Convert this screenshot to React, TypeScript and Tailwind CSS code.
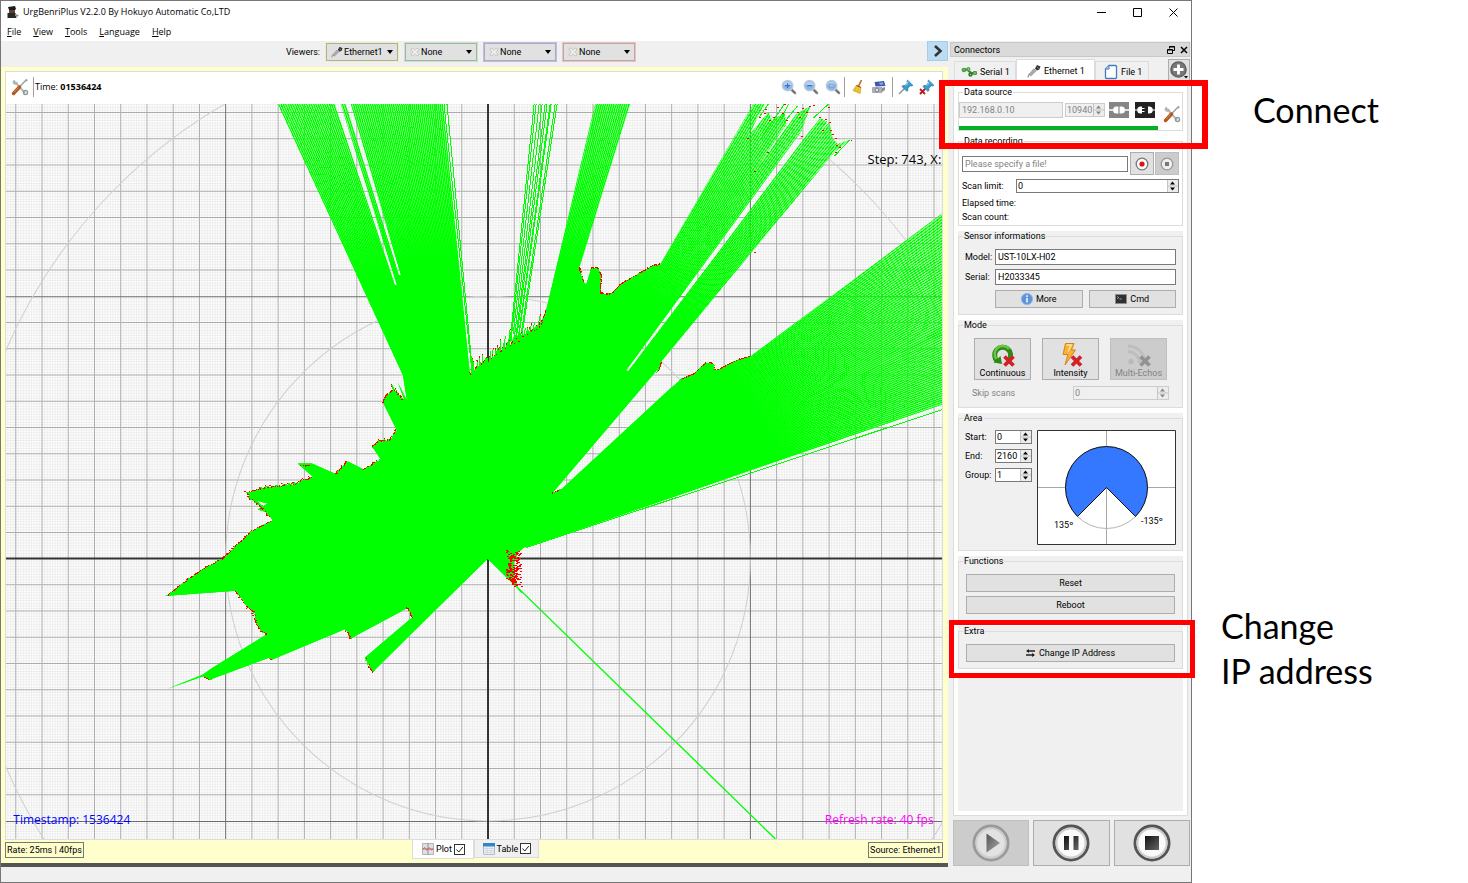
import React from "react";

type Pt = [number, number];

const ORIGIN: Pt = [488, 558];

/* ---------- Scan data ---------- */

const outline: Pt[] = [
  [488, 558], [373, 671], [365, 657], [413, 616], [408, 607], [352, 637], [346, 628],
  [272, 659], [269, 657], [210, 679], [205, 675], [168, 688], [203, 674], [213, 667],
  [268, 633], [261, 630], [257, 622], [255, 611], [247, 605], [241, 596], [236, 590],
  [168, 595], [176, 589], [190, 578], [204, 568], [224, 558], [233, 549], [252, 531],
  [262, 525], [273, 520], [268, 512], [258, 509], [268, 503], [253, 499], [248, 493],
  [258, 489], [268, 487], [292, 485], [310, 480], [314, 477], [298, 463], [312, 463],
  [337, 474], [348, 461], [364, 469], [381, 459], [373, 447], [379, 441], [390, 440],
  [397, 430], [383, 402], [388, 394], [394, 390], [406, 404], [398, 382], [407, 400],
  [403, 375], [278, 104], [335, 104], [395, 285], [397, 285], [341, 104], [346, 104],
  [399, 275], [401, 275], [351, 104], [443, 104], [470, 375], [478, 366], [488, 361],
  [500, 352], [510, 346], [514, 336], [526, 334], [541, 322], [546, 310], [595, 104],
  [630, 104], [579, 268], [581, 280], [586, 284], [591, 268], [597, 268], [601, 275],
  [600, 294], [611, 294], [622, 283], [640, 273], [652, 266], [660, 264], [753, 104],
  [764, 104], [748, 136], [768, 112], [772, 121], [784, 112], [786, 124], [754, 171],
  [796, 114], [810, 106], [801, 131], [626, 370], [628, 371], [807, 134], [820, 118],
  [827, 122], [819, 133], [829, 122], [832, 138], [837, 144], [849, 140], [834, 152],
  [662, 360], [655, 372], [552, 493], [561, 489], [670, 388], [681, 379], [693, 374],
  [705, 363], [712, 363], [715, 371], [730, 363], [734, 361], [750, 356], [942, 213],
  [942, 404], [538, 543], [524, 547], [518, 552], [514, 562], [514, 575], [518, 588],
];

const walls: { pts: Pt[]; reach: number }[] = [
  { pts: [[373, 671], [366, 657]], reach: 3 },
  { pts: [[413, 616], [407, 606]], reach: 3 },
  { pts: [[352, 637], [346, 628]], reach: 3 },
  { pts: [[272, 659], [269, 657]], reach: 2 },
  { pts: [[210, 679], [204, 675]], reach: 3 },
  { pts: [[268, 633], [261, 630], [257, 622], [255, 611], [247, 605], [241, 596], [236, 590]], reach: 3 },
  { pts: [[168, 595], [190, 578], [204, 568], [224, 558], [233, 549], [252, 531], [273, 520]], reach: 2 },
  { pts: [[271, 516], [262, 506], [253, 499], [248, 493], [268, 487], [292, 485], [314, 477]], reach: 7 },
  { pts: [[303, 466], [312, 466]], reach: 8 },
  { pts: [[337, 474], [348, 461]], reach: 3 },
  { pts: [[364, 469], [381, 459]], reach: 2 },
  { pts: [[373, 447], [379, 441], [390, 440], [397, 430]], reach: 3 },
  { pts: [[383, 402], [388, 394], [394, 390]], reach: 3 },
  { pts: [[394, 390], [406, 404]], reach: 14 },
  { pts: [[470, 375], [478, 366], [488, 361], [500, 352], [510, 346], [526, 338], [541, 326]], reach: 18 },
  { pts: [[541, 326], [546, 310]], reach: 5 },
  { pts: [[579, 268], [583, 284]], reach: 4 },
  { pts: [[591, 268], [597, 268], [601, 275], [600, 294], [611, 294]], reach: 2 },
  { pts: [[611, 294], [622, 283], [640, 273], [652, 266], [660, 264]], reach: 2 },
  { pts: [[661, 362], [658, 371]], reach: 2 },
  { pts: [[552, 493], [561, 489]], reach: 2 },
  { pts: [[681, 379], [693, 374], [705, 363], [712, 363], [715, 371], [734, 361], [750, 356]], reach: 2 },
];

/* Far returns where single beams end at scattered distances. */
const farTips: Pt[] = [
  [759, 117], [764, 113], [769, 120], [765, 109], [777, 107], [782, 113], [784, 104], [773, 117],
  [786, 120], [797, 112], [802, 108], [806, 112], [809, 106], [813, 105], [799, 117], [767, 152],
  [801, 136], [819, 117], [825, 119], [829, 122], [828, 107], [830, 130], [832, 134], [835, 138],
  [836, 145], [839, 147], [850, 140], [835, 152], [822, 130], [747, 138], [754, 171], [754, 252],
];

function makeRandom(seed: number) {
  let s = seed;
  return () => {
    s = (s * 1664525 + 1013904223) % 4294967296;
    return s / 4294967296;
  };
}

function rayTo(angle: number, from: number, to: number) {
  const c = Math.cos(angle);
  const s = Math.sin(angle);
  return `M${(ORIGIN[0] + c * from).toFixed(1)} ${(ORIGIN[1] - s * from).toFixed(1)}L${(ORIGIN[0] + c * to).toFixed(1)} ${(ORIGIN[1] - s * to).toFixed(1)}`;
}

const fan = (() => {
  let d = "";
  for (let i = -180; i <= 900; i += 1) d += rayTo((i * 0.25 * Math.PI) / 180, 0, 720);
  return d;
})();

const noise = (() => {
  const random = makeRandom(11);
  let green = "";
  let red = "";
  walls.forEach(({ pts, reach }) => {
    for (let i = 1; i < pts.length; i += 1) {
      const [ax, ay] = pts[i - 1];
      const [bx, by] = pts[i];
      const steps = Math.max(2, Math.round(Math.hypot(bx - ax, by - ay)));
      for (let k = 0; k < steps; k += 1) {
        const x = ax + ((bx - ax) * k) / steps;
        const y = ay + ((by - ay) * k) / steps;
        const angle = Math.atan2(ORIGIN[1] - y, x - ORIGIN[0]);
        const r = Math.hypot(x - ORIGIN[0], y - ORIGIN[1]);
        const out = random() * random() * reach;
        green += rayTo(angle, r - 3, r + out);
        if (random() < 0.7) red += rayTo(angle, r + out - 0.5, r + out + 0.8);
      }
    }
  });
  farTips.forEach(([x, y]) => {
    red += `M${x} ${y}.5h1.5`;
  });
  for (let i = 0; i < 200; i += 1) {
    const y = 549 + random() * 36;
    const x = 513 + (random() + random() - 1) * 8;
    if (x - 488 > y - 559) red += `M${x.toFixed(0)} ${y.toFixed(0)}.5h1.5`;
  }
  return { green, red };
})();

const thinRays = [534, 536, 539, 542, 545, 547, 550, 551, 555, 557]
  .map((x, i) => {
    const angle = Math.atan2(454, x - 488);
    return rayTo(angle, 212 + ((i * 7) % 20), 462);
  })
  .join("");

const gridLines = (step: number, skipTenth: boolean) => {
  let d = "";
  for (let i = -260; i <= 260; i += 1) {
    if (skipTenth && i % 10 === 0) continue;
    const x = ORIGIN[0] + i * step;
    const y = ORIGIN[1] + i * step;
    if (x > 5 && x < 943) d += `M${x.toFixed(1)} 104V839`;
    if (y > 103 && y < 839) d += `M5 ${y.toFixed(1)}H943`;
  }
  return d;
};

function ScanPlot() {
  const area = outline.map((p) => p.join(",")).join(" ");
  return (
    <svg
      viewBox="6 104 936 734"
      preserveAspectRatio="xMidYMid slice"
      className="block h-0 w-full grow bg-white font-['Open_Sans',sans-serif]"
      role="img"
      aria-label="Scan plot"
    >
      <defs>
        <clipPath id="scan-area">
          <polygon points={area} />
        </clipPath>
        <radialGradient id="scan-density" gradientUnits="userSpaceOnUse" cx="488" cy="558" r="560">
          <stop offset="0.54" stopColor="#00ff00" />
          <stop offset="0.66" stopColor="#00ff00" stopOpacity="0.7" />
          <stop offset="0.92" stopColor="#00ff00" stopOpacity="0.45" />
        </radialGradient>
      </defs>
      <path d={gridLines(2.62, true)} stroke="#eeeeee" strokeWidth="1" fill="none" />
      <path d={gridLines(26.2, true)} stroke="#acacac" strokeWidth="1" fill="none" />
      <path d="M226 104V838M750 104V838M6 296.5H942M6 820.5H942" stroke="#6c6c6c" fill="none" />
      <g fill="none" stroke="#cfcfcf">
        <circle cx="488" cy="558" r="262" />
        <circle cx="488" cy="558" r="524.5" />
      </g>
      <path d="M488 104V838M6 558H942" stroke="#333" strokeWidth="2" fill="none" />
      <polygon points={area} fill="url(#scan-density)" />
      <path d="M150 440H400V700H150z" fill="#00ff00" clipPath="url(#scan-area)" />
      <g stroke="#00ff00" fill="none" shapeRendering="crispEdges">
        <g clipPath="url(#scan-area)">
          <path d={fan} />
        </g>
        <path d={noise.green} />
        <path d={thinRays} />
        <path d="M444 104L472 372M447 104L473 376M526 547L942 409M500 568L522 592M396 285L402 296M400 275L405 288" />
        <path d="M759 117L768 104M760 140L784 104M778 124L788 104M784 122L797 106M813 118L828 104M834 156L849 140" />
      </g>
      <path d="M488 558L775 838" stroke="#00ff00" strokeWidth="1.4" fill="none" />
      <path d={noise.red} stroke="#ff0000" fill="none" shapeRendering="crispEdges" />
      <text x="867" y="164" fontSize="13" fill="#000">Step: 743, X:</text>
      <text x="14" y="823" fontSize="12" fill="#0000ff">Timestamp: 1536424</text>
      <text x="933" y="823" fontSize="12" textAnchor="end" fill="#ff00ff">Refresh rate: 40 fps</text>
    </svg>
  );
}

/* ---------- Icons ---------- */

const ToolsIcon = () => (
  <svg viewBox="0 0 18 18" className="size-[18px]" aria-hidden="true">
    <path d="M5 5l9 10" stroke="#b3bcbc" strokeWidth="2" />
    <path d="M1.5 3.5l2-2 1 2 2 .5.5 2-2 1-3-1z" fill="#aeb8b8" />
    <circle cx="14.5" cy="14.5" r="2" fill="none" stroke="#8c989a" strokeWidth="1.4" />
    <path d="M15.5 1.5L8 9.5" stroke="#9ba5a8" strokeWidth="1.5" />
    <path d="M15 1l1.8 1-1.4 2" fill="#8c989a" />
    <path d="M8.5 9L2.5 15.5" stroke="#b4551b" strokeWidth="3.4" strokeLinecap="round" />
    <path d="M7.5 9.5L3 14.2" stroke="#dc8a4c" strokeWidth="1" />
  </svg>
);

const PlugIcon = ({ className }: { className: string }) => (
  <svg viewBox="0 0 14 14" className={className} aria-hidden="true">
    <path d="M1 13.5c0-2 .6-3 2-4" stroke="#999" strokeWidth="1.3" fill="none" />
    <path d="M2 10.5L6.8 4.6l2.5 2.2L4 12z" fill="#a9aba6" stroke="#888" strokeWidth=".5" />
    <path d="M8 4.5L10 1l3.5 1.6-1.2 3-2.4 1z" fill="#333" />
    <path d="M10 3.4l1.6.8" stroke="#999" strokeWidth=".8" />
  </svg>
);

const NoneIcon = () => (
  <svg viewBox="0 0 10 10" className="size-[10px] shrink-0" aria-hidden="true">
    <path d="M1.5 1.5l7 7M8.5 1.5l-7 7" stroke="#b8b8b8" strokeWidth="3" />
    <path d="M2 2l6 6M8 2L2 8" stroke="#efefef" strokeWidth="1.8" />
  </svg>
);

const SerialIcon = () => (
  <svg viewBox="0 0 17 12" className="h-3 w-[17px]" aria-hidden="true">
    <path d="M1 4.5C4 1.5 7 4 9 6s4 1 6 1" stroke="#3c8a35" strokeWidth="2.2" fill="none" />
    <circle cx="3" cy="4" r="2.2" fill="#4c9b45" />
    <circle cx="7.5" cy="3" r="2" fill="#57a650" />
    <circle cx="9.5" cy="8.5" r="2.2" fill="#2f7a2a" />
    <rect x="12" y="5" width="4" height="4" rx="1" fill="#4c9b45" />
    <path d="M2.5 4h1M7 3h1M9 8.5h1M13.2 7h1.4" stroke="#d4edd0" strokeWidth=".9" />
  </svg>
);

const FileIcon = () => (
  <svg viewBox="0 0 14 16" className="h-4 w-[14px]" aria-hidden="true">
    <path d="M5 1.5h6.5q1 0 1 1v11q0 1-1 1h-9q-1 0-1-1V5z" fill="#fff" stroke="#3f7dc0" strokeWidth="1.3" />
    <path d="M1.5 5H5V1.5" fill="#b8d3ee" stroke="#3f7dc0" />
  </svg>
);

const AddIcon = () => (
  <svg viewBox="0 0 20 20" className="size-5" aria-hidden="true">
    <circle cx="9.5" cy="9.5" r="7.6" fill="#777" stroke="#5c5c5c" strokeWidth="1.4" />
    <path d="M9.5 4.5v10M4.5 9.5h10" stroke="#fff" strokeWidth="2.8" />
    <path d="M15 16h4l-2 2.5z" fill="#000" />
  </svg>
);

const ZoomIcon = ({ sign }: { sign: "plus" | "minus" | "fit" }) => (
  <svg viewBox="0 0 16 16" className="size-4" aria-hidden="true">
    <path d="M10 10l4 4" stroke="#8b8b8b" strokeWidth="2.6" strokeLinecap="round" />
    <path d="M11 11.4l2.6 2.6" stroke="#555" strokeWidth="1" />
    <circle cx="6.6" cy="6.6" r="5.2" fill="#8ab6ea" stroke="#bccada" strokeWidth="1.5" />
    <path d="M2.5 6a4.2 4.2 0 0 1 8.2 0z" fill="#b3d1f4" />
    {sign === "plus" && <path d="M6.6 4.2v4.8M4.2 6.6H9" stroke="#3a70bd" strokeWidth="1.2" />}
    {sign === "minus" && <path d="M4.2 6.6H9" stroke="#3a70bd" strokeWidth="1.2" />}
    {sign === "fit" && <path d="M4 5.2h5.2v3H4z" stroke="#6a95d0" fill="#a6c7ee" strokeWidth=".8" />}
  </svg>
);

const BroomIcon = () => (
  <svg viewBox="0 0 16 16" className="size-4" aria-hidden="true">
    <path d="M11.5 1L8.6 7" stroke="#a87b24" strokeWidth="1.7" />
    <path d="M6.5 6.2l4.3 2-.6 6.3L3 11.5z" fill="#f3cf2d" stroke="#b58d14" strokeWidth=".6" />
    <path d="M6.4 6.4l4.4 2" stroke="#c63a2a" strokeWidth="1.1" />
    <path d="M5 11.5l1.5-3M7.4 13l1-3.6" stroke="#c29a1a" strokeWidth=".6" />
  </svg>
);

const SnapshotIcon = () => (
  <svg viewBox="0 0 16 16" className="size-4" aria-hidden="true">
    <path d="M3.5 3l9.5-1 1.5 5-10 .5z" fill="#3c58a8" />
    <path d="M8 3.8l4-.4.6 2-3.8.4z" fill="#8fa8e4" />
    <path d="M1.5 8.5h9.5v5H1.5z" fill="#b0b3bc" stroke="#888c98" strokeWidth=".6" />
    <circle cx="6" cy="11" r="1.8" fill="#e7e9f0" stroke="#666c80" strokeWidth=".8" />
    <path d="M11 9l3-1v3l-3 2z" fill="#8d909c" />
  </svg>
);

const PinIcon = ({ remove }: { remove?: boolean }) => (
  <svg viewBox="0 0 16 16" className="size-4" aria-hidden="true">
    <path d="M6.5 9.5L1 15" stroke="#8b8f94" strokeWidth="1.4" />
    <path d="M9.4 1L15 6.4l-1.6.7-1-.3-2.6 2.5.2 2.2-1.2.8L3.9 7.6l.9-1.1 2.2.1 2.4-2.7-.4-1.2z" fill="#3a9ccb" stroke="#1f6d98" strokeWidth=".6" />
    <path d="M9.8 2.6l-.2 2.2-2 2" stroke="#a6dbf0" strokeWidth="1" fill="none" />
    {remove && <path d="M1 10l5 5M6 10l-5 5" stroke="#c6161d" strokeWidth="1.8" />}
  </svg>
);

const RedCross = ({ x, y, color = "#d21f28" }: { x: number; y: number; color?: string }) => (
  <path d={`M${x} ${y}l9 9m0 -9l-9 9`} stroke={color} strokeWidth="3.8" />
);

const ContinuousIcon = () => (
  <svg viewBox="0 0 26 26" className="size-[26px]" aria-hidden="true">
    <path d="M7.2 19A8 8 0 1 1 19 18" stroke="#2c8a16" strokeWidth="5" fill="none" />
    <path d="M6.4 17A8 8 0 0 1 19 7" stroke="#6cc840" strokeWidth="2.4" fill="none" />
    <path d="M3.5 20.5l8.5 1.5-1.5-8z" fill="#2c8a16" />
    <RedCross x={14.5} y={14.5} />
  </svg>
);

const IntensityIcon = () => (
  <svg viewBox="0 0 26 26" className="size-[26px]" aria-hidden="true">
    <path d="M7.5 1.5h8.5l-2.5 6.5h4L7 23l2.8-10.5H5z" fill="#f9b233" stroke="#d27c14" strokeWidth=".9" />
    <path d="M8.6 3h4.6L10 9.5" stroke="#fde3a0" strokeWidth="1.5" fill="none" />
    <RedCross x={14} y={14.5} />
  </svg>
);

const EchoIcon = () => (
  <svg viewBox="0 0 26 26" className="size-[26px]" aria-hidden="true">
    <path d="M2 4a17 17 0 0 1 17 17M2 9.5A11.5 11.5 0 0 1 13.5 21" stroke="#bebebe" strokeWidth="3" fill="none" />
    <circle cx="5" cy="19.5" r="2.7" fill="#bababa" />
    <RedCross x={14.5} y={14.5} color="#929292" />
  </svg>
);

const ConnectedIcon = () => (
  <svg viewBox="0 0 20 16" className="h-4 w-5" aria-hidden="true">
    <path d="M0 0h20v16H0z" fill="#858585" />
    <path d="M0 8h4M16 8h4" stroke="#fff" strokeWidth="1.4" />
    <path d="M9.4 4.5v7H7.5q-3.5 0-3.5-3.5t3.5-3.5zM10.6 4.5v7h1.9q3.5 0 3.5-3.5t-3.5-3.5z" fill="#fff" />
  </svg>
);

const DisconnectedIcon = () => (
  <svg viewBox="0 0 20 16" className="h-4 w-5" aria-hidden="true">
    <path d="M0 0h20v16H0z" fill="#222" />
    <path d="M0 8h3M17 8h3M6 6.5h3.5M6 9.5h3.5" stroke="#fff" strokeWidth="1.2" />
    <path d="M7 4.5v7H5.5q-3.3 0-3.3-3.5t3.3-3.5zM13 4.5v7h1q3.8 0 3.8-3.5T14 4.5z" fill="#fff" />
  </svg>
);

const InfoIcon = () => (
  <svg viewBox="0 0 12 12" className="size-3" aria-hidden="true">
    <circle cx="6" cy="6" r="5.6" fill="#5d94dc" stroke="#8cb4e8" strokeWidth=".8" />
    <path d="M6 5v4.4M6 2.3v1.6" stroke="#fff" strokeWidth="1.5" />
  </svg>
);

const TerminalIcon = () => (
  <svg viewBox="0 0 12 10" className="h-[10px] w-3" aria-hidden="true">
    <path d="M.5 .5h11v9H.5z" fill="#2e3133" stroke="#8a8a8a" />
    <path d="M2.3 2.5l1.4 1-1.4 1M4.5 5h2" stroke="#ddd" strokeWidth=".7" fill="none" />
  </svg>
);

const SwapIcon = () => (
  <svg viewBox="0 0 9 8" className="h-2 w-[9px]" aria-hidden="true">
    <path d="M1 2h8M0 6h8" stroke="#222" strokeWidth="1.3" />
    <path d="M0 2l3-2v4zM9 6L6 4v4z" fill="#222" />
  </svg>
);

const PlotIcon = () => (
  <svg viewBox="0 0 12 12" className="size-3" aria-hidden="true">
    <path d="M.5 .5h11v11H.5z" fill="#e0e0e4" stroke="#b5b5b8" />
    <path d="M6 0v12M0 6h12" stroke="#8f8f95" />
    <path d="M1 6l2-1.4L5 7.4l2.4-2.8L9 7l2-1" stroke="#e0525c" fill="none" />
  </svg>
);

const TableIcon = () => (
  <svg viewBox="0 0 12 12" className="size-3" aria-hidden="true">
    <path d="M.5 .5h11v11H.5z" fill="#eef1f5" stroke="#b4bcc8" />
    <path d="M0 0h12v3.5H0z" fill="#2f86c8" />
    <path d="M1 5.5h10M1 7.5h10M1 9.5h10M4 4v7M8 4v7" stroke="#c9d1db" strokeWidth=".7" />
  </svg>
);

const AppIcon = () => (
  <svg viewBox="0 0 14 14" className="size-[14px]" aria-hidden="true">
    <path d="M2 2l7-1 1 3-1 1H3z" fill="#1d1d1d" />
    <path d="M3 5h6v3H3z" fill="#6a3c28" />
    <path d="M1.5 8h8l1 5h-9z" fill="#242a26" />
    <path d="M9 8.5l4 2-1.5 1.3L9 11z" fill="#8d9494" />
  </svg>
);

const MediaIcon = ({ kind }: { kind: "play" | "pause" | "stop" }) => {
  const dim = kind === "play";
  return (
    <svg viewBox="0 0 38 38" className="size-[38px]" aria-hidden="true">
      <defs>
        <linearGradient id={`ink-${kind}`} x1="0" y1="0" x2="1" y2="1">
          <stop offset="0" stopColor={dim ? "#555" : "#111"} />
          <stop offset="1" stopColor={dim ? "#a8a8a8" : "#666"} />
        </linearGradient>
      </defs>
      <circle cx="19" cy="19" r="17" fill={dim ? "#e2e2e2" : "#fafafa"} stroke={dim ? "#9a9a9a" : "#555"} strokeWidth="3" />
      <circle cx="19" cy="19" r="14.6" fill="none" stroke="#cfcfcf" strokeWidth="2" />
      {kind === "play" && <path d="M14.5 9.5L28 19l-13.5 9.5z" fill="url(#ink-play)" />}
      {kind === "pause" && <path d="M12 12h5v14h-5zM21.5 12h5v14h-5z" fill="url(#ink-pause)" />}
      {kind === "stop" && <path d="M12 12h14v14H12z" fill="url(#ink-stop)" />}
    </svg>
  );
};

const Arrows = () => (
  <svg viewBox="0 0 11 12" className="h-full w-[11px] shrink-0" aria-hidden="true">
    <path d="M0 0h11v12H0z" fill="#ececec" />
    <path d="M.5 0v12M0 6h11" stroke="#c4c4c4" />
    <path d="M3 4.5h5l-2.5-3zM3 7.5h5l-2.5 3z" fill="currentColor" />
  </svg>
);

/* ---------- Controls ---------- */

const Caret = () => (
  <svg viewBox="0 0 6 4" className="h-1 w-[6px] shrink-0" aria-hidden="true">
    <path d="M0 0h6L3 4z" fill="#000" />
  </svg>
);

function ViewerSelect({ value, ring, label }: { value: string; ring: string; label: string }) {
  return (
    <div className={`border ${ring}`}>
      <div className="flex h-[18px] w-[72px] items-center border border-[#adadad] bg-[#e1e1e1] px-1">
        {value === "None" ? <NoneIcon /> : <PlugIcon className="size-3 shrink-0" />}
        <select aria-label={label} defaultValue={value} className="min-w-0 flex-1 appearance-none bg-transparent pl-px outline-none">
          <option>{value}</option>
        </select>
        <Caret />
      </div>
    </div>
  );
}

function Spin({ id, value, className, disabled, label }: { id: string; value: string; className: string; disabled?: boolean; label?: string }) {
  const tone = disabled ? "border-[#cccccc] bg-[#f0f0f0] text-[#838383]" : "border-[#7a7a7a] bg-white text-black";
  return (
    <div className={`flex h-[14px] border ${tone} ${className}`}>
      <input id={id} aria-label={label} defaultValue={value} disabled={disabled} className="w-0 min-w-0 flex-1 bg-transparent pl-px outline-none" />
      <Arrows />
    </div>
  );
}

function Group({ title, tone = "bg-[#f0f0f0]", className = "", children }: { title: string; tone?: string; className?: string; children: React.ReactNode }) {
  return (
    <div className={tone}>
      <fieldset className="min-w-0 border border-[#dcdcdc]">
        <legend className="ml-1 px-px leading-[10px]">{title}</legend>
        <div className={className}>{children}</div>
      </fieldset>
    </div>
  );
}

const button = "flex items-center justify-center border border-[#adadad] bg-[#e1e1e1]";

function ModeButton({ label, disabled, children }: { label: string; disabled?: boolean; children: React.ReactNode }) {
  return (
    <button
      type="button"
      disabled={disabled}
      className={`flex h-[42px] w-[57px] flex-col items-center justify-end border leading-[11px] whitespace-nowrap ${disabled ? "border-[#bfbfbf] bg-[#cccccc] text-[#838383]" : "border-[#adadad] bg-[#e1e1e1]"}`}
    >
      {children}
      {label}
    </button>
  );
}

function AreaPreview() {
  return (
    <svg viewBox="0 0 139 115" className="h-[115px] min-w-0 flex-1" role="img" aria-label="Scan area">
      <path d="M.5 .5h138v114H.5z" fill="#fff" stroke="#333" />
      <path d="M69.5 1v113M1 57.5h137" stroke="#a8a8a8" />
      <circle cx="69.5" cy="57.5" r="41" fill="#fff" stroke="#b4b4b4" />
      <path d="M69.5 57.5v41" stroke="#a8a8a8" />
      <path d="M69.5 57.5L40.5 86.5A41 41 0 1 1 98.5 86.5z" fill="#3378ff" stroke="#111" />
      <text x="17" y="98" fontSize="9">135º</text>
      <text x="104" y="94" fontSize="9">-135º</text>
    </svg>
  );
}

function Connectors() {
  const field = "h-4 min-w-0 border border-[#7a7a7a] bg-white pl-0.5 outline-none";
  return (
    <aside className="flex w-60 shrink-0 flex-col pt-[2px]">
      <header className="flex h-[15px] items-center border border-[#c8c8c8] bg-[#dadada] pr-px pl-[3px]">
        <h2 className="flex-1">Connectors</h2>
        <button type="button" aria-label="Float" className="mr-[5px]">
          <svg viewBox="0 0 8 8" className="size-2"><path d="M2.5 2.5v-2h5v4h-2M2 1h5.5M.5 3.5h5v4h-5zM.5 4h5" fill="none" stroke="#000" /></svg>
        </button>
        <button type="button" aria-label="Close">
          <svg viewBox="0 0 8 8" className="size-2"><path d="M1 1l6 6M7 1L1 7" stroke="#000" strokeWidth="1.5" /></svg>
        </button>
      </header>

      <div className="mt-[2px] flex items-end pl-1">
        <button type="button" className="flex h-[20px] w-[62px] items-center gap-[2px] border border-b-0 border-[#dcdcdc] pl-[6px] whitespace-nowrap"><SerialIcon />Serial 1</button>
        <button type="button" className="flex h-[22px] w-[79px] items-center gap-[3px] border border-b-0 border-[#dcdcdc] bg-white pl-[10px] whitespace-nowrap"><PlugIcon className="size-[14px]" />Ethernet 1</button>
        <button type="button" className="flex h-[20px] w-[54px] items-center gap-[3px] border border-b-0 border-[#dcdcdc] pl-2 whitespace-nowrap"><FileIcon />File 1</button>
        <button type="button" aria-label="Add connector" className="ml-auto flex size-[22px] items-center justify-center border border-[#adadad] bg-[#e1e1e1]"><AddIcon /></button>
      </div>

      <div className="mr-[2px] ml-[3px] flex grow flex-col gap-[5px] border border-[#dcdcdc] bg-white px-1 pt-[5px] pb-1">
        <div className="relative">
          <Group title="Data source" tone="bg-white" className="pt-[5px]">
            <div className="flex">
              <div className="w-[199px]">
                <div className="flex items-center">
                  <input aria-label="IP address" defaultValue="192.168.0.10" disabled className="h-4 w-[104px] border border-[#cccccc] bg-[#f0f0f0] pl-0.5 text-[#838383]" />
                  <Spin id="port" label="Port" value="10940" disabled className="ml-[2px] w-10" />
                  <button type="button" aria-label="Connect" className="ml-1"><ConnectedIcon /></button>
                  <button type="button" aria-label="Disconnect" className="ml-[6px]"><DisconnectedIcon /></button>
                </div>
                <div className="mt-2 h-1 bg-[#06b025]" />
              </div>
              <button type="button" aria-label="Connection settings" className="mt-[3px] ml-[5px] self-start"><ToolsIcon /></button>
            </div>
          </Group>
          <div className="pointer-events-none absolute -top-[7px] -right-[25px] -bottom-[18px] -left-[19px] z-10 border-[6px] border-[#ff0000]" />
        </div>

        <Group title="Data recording" tone="bg-white" className="px-[3px] pt-[6px] pb-px">
          <div className="flex items-center">
            <input aria-label="Recording file" placeholder="Please specify a file!" className={`${field} flex-1 placeholder:text-[#838383]`} />
            <button type="button" aria-label="Record" className={`${button} ml-[2px] h-[23px] w-6`}>
              <svg viewBox="0 0 14 14" className="size-[14px]"><circle cx="7" cy="7" r="5.8" fill="#fff" stroke="#777" strokeWidth="1.3" /><circle cx="7" cy="7" r="2.6" fill="#dc1414" /></svg>
            </button>
            <button type="button" aria-label="Stop recording" disabled className="ml-px flex h-[23px] w-6 items-center justify-center border border-[#bfbfbf] bg-[#cccccc]">
              <svg viewBox="0 0 14 14" className="size-[14px]"><circle cx="7" cy="7" r="5.8" fill="#eee" stroke="#999" strokeWidth="1.3" /><path d="M5 5h4v4H5z" fill="#777" /></svg>
            </button>
          </div>
          <div className="mt-1 flex items-center">
            <label htmlFor="limit" className="w-[54px]">Scan limit:</label>
            <Spin id="limit" value="0" className="flex-1" />
          </div>
          <p className="mt-[3px] leading-[14px]">Elapsed time:</p>
          <p className="leading-[14px]">Scan count:</p>
        </Group>

        <Group title="Sensor informations" className="px-[6px] pt-2 pb-[6px]">
          <div className="flex items-center">
            <label htmlFor="model" className="w-[30px]">Model:</label>
            <input id="model" defaultValue="UST-10LX-H02" className={`${field} flex-1`} />
          </div>
          <div className="mt-1 flex items-center">
            <label htmlFor="serial" className="w-[30px]">Serial:</label>
            <input id="serial" defaultValue="H2033345" className={`${field} flex-1`} />
          </div>
          <div className="mt-[5px] flex gap-[6px] pl-[30px]">
            <button type="button" className={`${button} h-[18px] flex-1 gap-[3px]`}><InfoIcon />More</button>
            <button type="button" className={`${button} h-[18px] flex-1 gap-[3px]`}><TerminalIcon />Cmd</button>
          </div>
        </Group>

        <Group title="Mode" className="px-[13px] pt-2 pb-[7px]">
          <div className="flex justify-between px-[2px]">
            <ModeButton label="Continuous"><ContinuousIcon /></ModeButton>
            <ModeButton label="Intensity"><IntensityIcon /></ModeButton>
            <ModeButton label="Multi-Echos" disabled><EchoIcon /></ModeButton>
          </div>
          <div className="mt-[6px] flex items-center justify-between text-[#838383]">
            <label htmlFor="skip">Skip scans</label>
            <Spin id="skip" value="0" disabled className="w-24" />
          </div>
        </Group>

        <Group title="Area" className="px-[6px] pt-[7px] pb-[5px]">
          <div className="flex gap-[5px]">
            <div className="flex flex-col gap-[5px]">
              {[["Start:", "0"], ["End:", "2160"], ["Group:", "1"]].map(([name, value]) => (
                <div key={name} className="flex items-center">
                  <label htmlFor={name} className="w-[30px]">{name}</label>
                  <Spin id={name} value={value} className="w-[37px]" />
                </div>
              ))}
            </div>
            <AreaPreview />
          </div>
        </Group>

        <Group title="Functions" className="px-[7px] pt-[8px] pb-[6px]">
          <button type="button" className={`${button} h-[18px] w-full`}>Reset</button>
          <button type="button" className={`${button} mt-1 h-[18px] w-full`}>Reboot</button>
        </Group>

        <div className="relative">
          <Group title="Extra" className="px-[7px] pt-[8px] pb-[6px]">
            <button type="button" className={`${button} h-[18px] w-full gap-1`}><SwapIcon />Change IP Address</button>
          </Group>
          <div className="pointer-events-none absolute -top-[6px] -right-[12px] -bottom-[9px] -left-[9px] z-10 border-[5px] border-[#ff0000]" />
        </div>

        <div className="grow bg-[#f0f0f0]" />
      </div>

      <div className="mt-1 mb-4 ml-[3px] flex gap-1">
        <button type="button" aria-label="Play" disabled className="flex h-[46px] flex-1 items-center justify-center border border-[#bfbfbf] bg-[#cccccc]"><MediaIcon kind="play" /></button>
        <button type="button" aria-label="Pause" className={`${button} h-[46px] flex-1`}><MediaIcon kind="pause" /></button>
        <button type="button" aria-label="Stop" className={`${button} h-[46px] flex-1`}><MediaIcon kind="stop" /></button>
      </div>
    </aside>
  );
}

const Divider = () => <span className="h-5 w-px bg-[#a0a0a0]" />;

function ViewTab({ label, icon, className }: { label: string; icon: React.ReactNode; className: string }) {
  return (
    <label className={`flex items-center justify-center gap-[2px] border border-t-0 border-[#dcdcdc] ${className}`}>
      {icon}
      <span>{label}</span>
      <span className="relative size-[11px]">
        <input type="checkbox" defaultChecked className="peer block size-[11px] appearance-none border border-[#333] bg-white" />
        <svg viewBox="0 0 11 11" className="pointer-events-none absolute inset-0 hidden size-[11px] peer-checked:block"><path d="M2.5 5.5l2.3 2.5 4-5" stroke="#222" fill="none" /></svg>
      </span>
    </label>
  );
}

function Viewer() {
  return (
    <section className="flex grow flex-col border-b-4 border-[#555] bg-[#ffffcc] pt-1 pr-[5px] pl-1">
      <div className="flex grow flex-col border border-[#dcdcdc] bg-white">
        <div className="flex h-8 items-center pr-[7px] pb-[2px] pl-[5px]">
          <button type="button" aria-label="Settings"><ToolsIcon /></button>
          <span className="mr-px ml-1"><span className="block h-5 w-px bg-[#a0a0a0]" /></span>
          <p className="flex-1 font-['Open_Sans',sans-serif]">Time: <b>01536424</b></p>
          <div className="flex items-center gap-[6px]">
            <button type="button" aria-label="Zoom in"><ZoomIcon sign="plus" /></button>
            <button type="button" aria-label="Zoom out"><ZoomIcon sign="minus" /></button>
            <button type="button" aria-label="Fit"><ZoomIcon sign="fit" /></button>
          </div>
          <div className="ml-[3px] flex items-center gap-[5px]">
            <Divider />
            <button type="button" aria-label="Clear"><BroomIcon /></button>
            <button type="button" aria-label="Snapshot"><SnapshotIcon /></button>
            <Divider />
            <button type="button" aria-label="Pin"><PinIcon /></button>
            <button type="button" aria-label="Remove pin"><PinIcon remove /></button>
          </div>
        </div>
        <ScanPlot />
      </div>
      <div className="flex h-[23px] items-start justify-between">
        <p className="mt-[2px] border border-[#777] px-px leading-[14px]">Rate: 25ms | 40fps</p>
        <div className="flex items-start">
          <ViewTab label="Plot" icon={<PlotIcon />} className="h-[19px] w-[62px] bg-white" />
          <ViewTab label="Table" icon={<TableIcon />} className="h-[18px] w-[65px] bg-[#f0f0f0]" />
        </div>
        <p className="mt-[2px] border border-[#777] px-px leading-[14px]">Source: Ethernet1</p>
      </div>
    </section>
  );
}

export default function App() {
  const menus = ["File", "View", "Tools", "Language", "Help"];
  return (
    <div className="flex min-h-screen bg-white font-['Roboto',sans-serif] text-[9px] leading-3 text-black">
      <main className="flex min-w-0 flex-1 flex-col border border-[#777] bg-[#f0f0f0]">
        <header className="bg-white font-['Open_Sans',sans-serif]">
          <div className="flex h-[22px] items-center pl-[5px]">
            <AppIcon />
            <h1 className="ml-[3px] flex-1">UrgBenriPlus V2.2.0 By Hokuyo Automatic Co,LTD</h1>
            <button type="button" aria-label="Minimize" className="flex w-9 justify-center"><svg viewBox="0 0 9 9" className="size-[9px]"><path d="M0 4.5h9" stroke="#000" /></svg></button>
            <button type="button" aria-label="Maximize" className="flex w-9 justify-center"><svg viewBox="0 0 9 9" className="size-[9px]"><path d="M.5 .5h8v8h-8z" stroke="#000" fill="none" /></svg></button>
            <button type="button" aria-label="Close window" className="flex w-9 justify-center"><svg viewBox="0 0 9 9" className="size-[9px]"><path d="M.5 .5l8 8M8.5 .5l-8 8" stroke="#000" /></svg></button>
          </div>
          <nav className="flex h-[18px] items-center gap-3 pl-[6px]">
            {menus.map((m) => (
              <button key={m} type="button"><span className="underline">{m[0]}</span>{m.slice(1)}</button>
            ))}
          </nav>
        </header>

        <div className="flex grow pr-px">
          <div className="flex min-w-0 flex-1 flex-col">
            <div className="flex h-[26px] items-start">
              <div className="flex flex-1 items-center justify-center gap-[5px] pt-px pr-[6px]">
                <span>Viewers:</span>
                <ViewerSelect label="Viewer 1" value="Ethernet1" ring="border-[#f4f0b0]" />
                <ViewerSelect label="Viewer 2" value="None" ring="border-[#bfe8c4]" />
                <ViewerSelect label="Viewer 3" value="None" ring="border-[#bcbcf4]" />
                <ViewerSelect label="Viewer 4" value="None" ring="border-[#f8bcbc]" />
              </div>
              <button type="button" aria-label="Toggle connectors" className="flex h-[20px] w-[21px] items-center justify-center border border-[#a5cdea] bg-[#bcdcf4]">
                <svg viewBox="0 0 10 12" className="h-3 w-[10px]"><path d="M2 1l5.5 5L2 11" stroke="#333" strokeWidth="2.6" fill="none" /></svg>
              </button>
            </div>
            <Viewer />
            <div className="h-[15px]" />
          </div>
          <div className="-mt-px ml-[2px] flex">
            <Connectors />
          </div>
        </div>
      </main>

      <aside className="w-[276px] shrink-0 pt-[87px] font-['Lato',sans-serif] text-[34px] leading-[45px]">
        <p className="pl-[61px]">Connect</p>
        <p className="mt-[471px] pl-[29px]">Change<br />IP address</p>
      </aside>
    </div>
  );
}
